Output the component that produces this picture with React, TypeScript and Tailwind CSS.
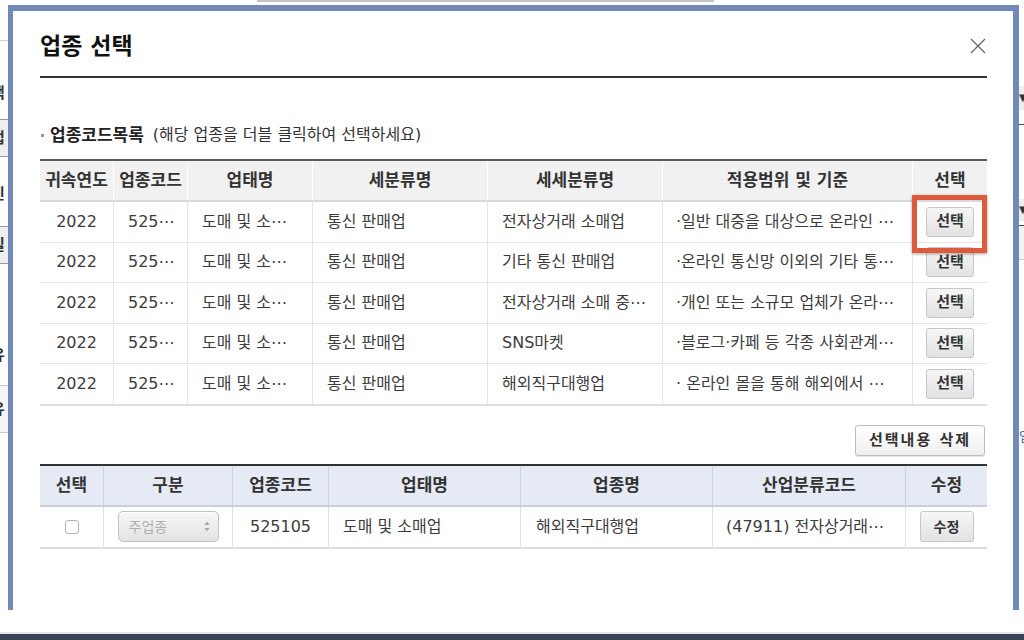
import React from 'react';

const codeRows = [
  ['2022', '525⋯', '도매 및 소⋯', '통신 판매업', '전자상거래 소매업', '·일반 대중을 대상으로 온라인 ⋯'],
  ['2022', '525⋯', '도매 및 소⋯', '통신 판매업', '기타 통신 판매업', '·온라인 통신망 이외의 기타 통⋯'],
  ['2022', '525⋯', '도매 및 소⋯', '통신 판매업', '전자상거래 소매 중⋯', '·개인 또는 소규모 업체가 온라⋯'],
  ['2022', '525⋯', '도매 및 소⋯', '통신 판매업', 'SNS마켓', '·블로그·카페 등 각종 사회관계⋯'],
  ['2022', '525⋯', '도매 및 소⋯', '통신 판매업', '해외직구대행업', '· 온라인 몰을 통해 해외에서 ⋯'],
];

const codeHeads = ['귀속연도', '업종코드', '업태명', '세분류명', '세세분류명', '적용범위 및 기준', '선택'];
const pickHeads = ['선택', '구분', '업종코드', '업태명', '업종명', '산업분류코드', '수정'];

const codeCols = 'grid grid-cols-[73px_74px_125px_175px_175px_250px_75px]';
const pickCols = 'grid grid-cols-[63px_129px_96px_192px_192px_193px_82px]';

const GreyButton = ({ children, className = '' }: { children: React.ReactNode; className?: string }) => (
  <button
    className={`flex items-center justify-center rounded-[3px] border border-[#c6c6c6] bg-gradient-to-b from-[#f6f6f6] to-[#e2e2e2] font-bold text-[#333] leading-none ${className}`}
  >
    {children}
  </button>
);

const App: React.FC = () => {
  return (
    <div className="relative h-[640px] w-[1024px] overflow-hidden bg-white font-['DejaVu_Sans','Noto_Sans_CJK_KR',sans-serif] text-[#333]">
      {/* page behind the dialog */}
      <div className="flex h-[632px] flex-col">
        <div className="ml-[257px] h-[2px] w-[457px] bg-[#c4c4c4]" />
        <div className="flex flex-1 justify-between">
          <div className="flex w-[8px] flex-col overflow-hidden text-[15px] font-bold leading-none text-[#333]">
            <div className="mt-[38px] h-px w-full bg-[#cfcfcf]" />
            <div className="-ml-[9px] mt-[45px]">택</div>
            <div className="mt-[18px] flex h-[38px] items-center border-y border-[#999] bg-[#eee] -ml-[9px]">업</div>
            <div className="-ml-[9px] mt-[30px]">신</div>
            <div className="mt-[24px] flex h-[38px] items-center border-y border-[#999] bg-[#eee] -ml-[9px]">일</div>
            <div className="-ml-[9px] mt-[84px]">유</div>
            <div className="mt-[22px] flex h-[48px] items-center border-y border-[#ccc] bg-[#f4f4f4] -ml-[9px]">유</div>
          </div>
          <div className="flex w-[5px] flex-col overflow-hidden text-[10px] leading-none text-[#333]">
            <div className="mt-[84px] flex h-[24px] items-center bg-[#eee]">▼</div>
            <div className="mt-[14px] h-px w-full bg-[#444]" />
            <div className="mt-[74px] flex h-[22px] items-center bg-[#eee]">▼</div>
            <div className="mt-[4px] h-px w-full bg-[#444]" />
            <div className="h-[34px] border-b border-[#ccc] bg-[#f2f2f2]" />
            <div className="mt-[170px] text-[13px] text-[#3a6fc2]">업</div>
          </div>
        </div>
      </div>
      <div className="h-[2px] bg-[#e4e4e4]" />
      <div className="h-[6px] bg-[#3b4257]" />

      {/* dialog */}
      <div className="absolute left-[8px] top-[5px] h-[605px] w-[1011px] border-l-[5px] border-r-[6px] border-t-[6px] border-[#7189b9] bg-white pl-[27px] pr-[26px]">
        <div className="flex h-[67px] items-center justify-between border-b-2 border-[#333] pt-[5px]">
          <h2 className="text-[23px] font-bold leading-none text-[#111]">업종 선택</h2>
          <svg width="16" height="16" viewBox="0 0 16 16" className="mr-[1px]">
            <path d="M1 1L15 15M15 1L1 15" stroke="#666" strokeWidth="1.3" />
          </svg>
        </div>

        <div className="mt-[46px] flex h-[22px] items-center">
          <span className="ml-[1px] mr-[6px] h-[3px] w-[3px] bg-[#999]" />
          <span className="text-[17px] font-bold leading-none text-[#222]">업종코드목록</span>
          <span className="ml-[9px] text-[16px] leading-none text-[#333]">(해당 업종을 더블 클릭하여 선택하세요)</span>
        </div>

        {/* code list */}
        <div className="relative mt-[13px] border-t-2 border-[#5a5a5a]">
          <div className={`${codeCols} h-[41px] border-b-2 border-[#d9d9d9] bg-[#f1f1f1]`}>
            {codeHeads.map((h, i) => (
              <div
                key={h}
                className={`flex items-center justify-center whitespace-nowrap text-[17px] font-bold leading-none text-[#333] ${i > 0 ? 'border-l border-white' : ''}`}
              >
                {h}
              </div>
            ))}
          </div>
          {codeRows.map((r, ri) => (
            <div
              key={ri}
              className={`${codeCols} text-[16px] leading-none text-[#3c3c3c] ${ri === codeRows.length - 1 ? 'h-[41.5px] border-b-2 border-[#dedede]' : 'h-[40.5px] border-b border-[#e4e4e4]'}`}
            >
              <div className="flex items-center justify-center">{r[0]}</div>
              <div className="flex items-center overflow-hidden whitespace-nowrap border-l border-[#e4e4e4] pl-[14px]">{r[1]}</div>
              <div className="flex items-center overflow-hidden whitespace-nowrap border-l border-[#e4e4e4] pl-[14px]">{r[2]}</div>
              <div className="flex items-center overflow-hidden whitespace-nowrap border-l border-[#e4e4e4] pl-[14px]">{r[3]}</div>
              <div className="flex items-center overflow-hidden whitespace-nowrap border-l border-[#e4e4e4] pl-[14px]">{r[4]}</div>
              <div className="flex items-center overflow-hidden whitespace-nowrap border-l border-[#e4e4e4] pl-[13px]">{r[5]}</div>
              <div className="flex items-center justify-center border-l border-[#e4e4e4]">
                <GreyButton className="h-[30px] w-[48px] text-[15px]">선택</GreyButton>
              </div>
            </div>
          ))}
          <div className="absolute left-[872px] top-[34px] h-[58px] w-[75px] border-[5px] border-[#dc5a3d] shadow-[0_1px_3px_rgba(0,0,0,0.35)]" />
        </div>

        <div className="mt-[19px] flex justify-end">
          <button className="mr-[2px] flex h-[31px] w-[130px] items-center justify-center rounded-[3px] border border-[#bdbdbd] bg-gradient-to-b from-white to-[#efefef] text-[15px] font-bold leading-none tracking-[2px] text-[#333] shadow-[0_1px_1px_rgba(0,0,0,0.12)]">
            선택내용 삭제
          </button>
        </div>

        {/* chosen list */}
        <div className="mt-[8px] border-t-2 border-[#333]">
          <div className={`${pickCols} h-[41px] border-b-2 border-[#c6cee0] bg-[#e6eaf5]`}>
            {pickHeads.map((h, i) => (
              <div
                key={h + i}
                className={`flex items-center justify-center text-[17px] font-bold leading-none text-[#333] ${i > 0 ? 'border-l border-[#c9d1e3]' : ''}`}
              >
                {h}
              </div>
            ))}
          </div>
          <div className={`${pickCols} h-[42px] border-b-2 border-[#dcdcdc] text-[16px] leading-none text-[#3c3c3c]`}>
            <div className="flex items-center justify-center">
              <span className="h-[14px] w-[14px] rounded-[3px] border border-[#b5b5b5] bg-white" />
            </div>
            <div className="flex items-center justify-center border-l border-[#e0e0e0]">
              <div className="flex h-[31px] w-[101px] items-center justify-between rounded-[5px] border border-[#c2c2c2] bg-gradient-to-b from-[#f7f7f7] to-[#e3e3e3] pl-[10px] pr-[8px] shadow-[inset_0_1px_0_white]">
                <span className="text-[14px] text-[#b0b0b0]">주업종</span>
                <svg width="6" height="11" viewBox="0 0 6 11">
                  <path d="M3 0.5L5.5 4H0.5Z M3 10.5L5.5 7H0.5Z" fill="#aaa" />
                </svg>
              </div>
            </div>
            <div className="flex items-center justify-center border-l border-[#e0e0e0]">525105</div>
            <div className="flex items-center border-l border-[#e0e0e0] pl-[14px]">도매 및 소매업</div>
            <div className="flex items-center border-l border-[#e0e0e0] pl-[15px]">해외직구대행업</div>
            <div className="flex items-center overflow-hidden whitespace-nowrap border-l border-[#e0e0e0] pl-[13px]">(47911) 전자상거래⋯</div>
            <div className="flex items-center justify-center border-l border-[#e0e0e0]">
              <GreyButton className="h-[31px] w-[54px] text-[14px]">수정</GreyButton>
            </div>
          </div>
        </div>
      </div>
    </div>
  );
};

export default App;
